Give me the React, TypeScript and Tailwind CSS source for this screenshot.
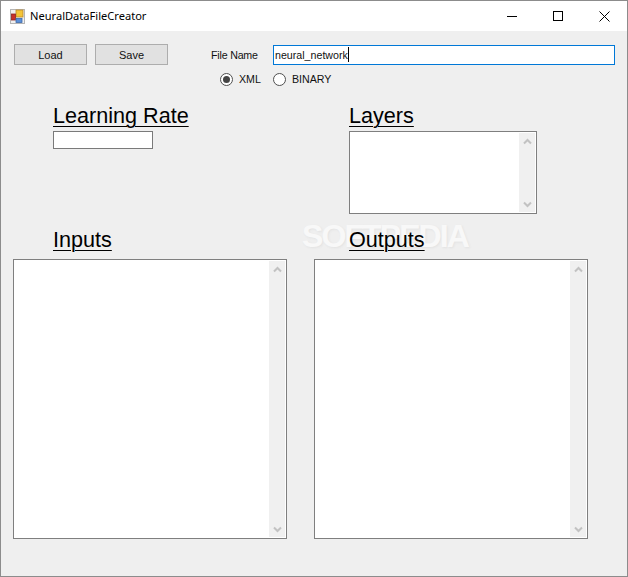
function AppIcon() {
  return (
    <svg width="15" height="15" viewBox="0 0 15 15" className="shrink-0">
      <rect x="0.5" y="0.5" width="14" height="14" fill="#f0f0f0" stroke="#b5b5b5" />
      <rect x="6" y="1" width="7" height="7" fill="#f5c537" stroke="#b8872a" strokeWidth="0.8" />
      <rect x="1.5" y="5" width="4" height="6" fill="#c8302a" stroke="#8f2420" strokeWidth="0.8" />
      <rect x="6" y="9.5" width="6" height="4" fill="#5b8fd8" stroke="#3d68a8" strokeWidth="0.8" />
    </svg>
  );
}

function WindowButtons() {
  return (
    <div className="ml-auto flex h-full items-center">
      <div className="flex w-[46px] items-center justify-center">
        <svg width="10" height="10" viewBox="0 0 10 10"><path d="M0 5.5H10" stroke="#000" strokeWidth="1" /></svg>
      </div>
      <div className="flex w-[46px] items-center justify-center">
        <svg width="10" height="10" viewBox="0 0 10 10"><rect x="0.5" y="0.5" width="9" height="9" fill="none" stroke="#000" strokeWidth="1" /></svg>
      </div>
      <div className="flex w-[46px] items-center justify-center">
        <svg width="11" height="11" viewBox="0 0 11 11"><path d="M0.5 0.5L10.5 10.5M10.5 0.5L0.5 10.5" stroke="#000" strokeWidth="1" /></svg>
      </div>
    </div>
  );
}

function Chevron({ down }: { down?: boolean }) {
  return (
    <svg width="9" height="7" viewBox="0 0 9 7" className={down ? "rotate-180" : ""}>
      <path d="M1 5.5 L4.5 2 L8 5.5" fill="none" stroke="#c2c2c2" strokeWidth="2" />
    </svg>
  );
}

function ScrollBox({ className }: { className: string }) {
  return (
    <div className={`flex justify-end border border-[#7f7f7f] bg-white p-px ${className}`}>
      <div className="flex w-[16px] flex-col items-center justify-between bg-[#f0f0f0] pb-[4px] pt-[5px]">
        <Chevron />
        <Chevron down />
      </div>
    </div>
  );
}

function Heading({ children }: { children: string }) {
  return <div className="relative pb-[2px] text-[21.6px] leading-[23px] text-black underline underline-offset-[3px] decoration-1">{children}</div>;
}

function Radio({ label, checked }: { label: string; checked?: boolean }) {
  return (
    <label className="flex items-center gap-[6px]">
      <span className="flex h-[13px] w-[13px] items-center justify-center rounded-full border border-[#505050] bg-white">
        {checked && <span className="h-[7px] w-[7px] rounded-full bg-[#444444]" />}
      </span>
      <span>{label}</span>
    </label>
  );
}

export default function App() {
  return (
    <div className="relative flex h-[577px] w-[628px] flex-col overflow-hidden border border-[#8c8c8c] bg-[#efefef] font-['Liberation_Sans',sans-serif] text-[10.67px] text-[#111111]">
      <div className="pointer-events-none absolute left-[301px] top-[211px] text-[32px] font-bold tracking-[-1.9px] text-white opacity-60 [text-shadow:1px_1px_2px_#dcdcdc]">
        SOFTPEDIA
      </div>

      <div className="flex h-[30px] shrink-0 items-center bg-white pl-[9px]">
        <AppIcon />
        <span className="ml-[5px] font-['Noto_Sans',sans-serif] text-[11.1px] text-black">NeuralDataFileCreator</span>
        <WindowButtons />
      </div>

      <div className="flex items-center pl-[13px] pt-[13px]">
        <button className="h-[21px] w-[73px] border border-[#adadad] bg-[#e1e1e1] pt-px text-[11px]">Load</button>
        <button className="ml-[8px] h-[21px] w-[73px] border border-[#adadad] bg-[#e1e1e1] pt-px text-[11px]">Save</button>
        <span className="ml-[43px] w-[62px] tracking-[-0.2px]">File Name</span>
        <div className="flex h-[20px] w-[342px] items-center border border-[#0078d7] bg-white px-[1px]">
          <span>neural_network</span>
          <span className="h-[15px] w-px bg-black" />
        </div>
      </div>

      <div className="ml-[219px] mt-[8px] flex gap-[12px] leading-[13px]">
        <Radio label="XML" checked />
        <Radio label="BINARY" />
      </div>

      <div className="mt-[18px] flex">
        <div className="ml-[52px] w-[296px]">
          <Heading>Learning Rate</Heading>
          <div className="mt-[2px] h-[18px] w-[100px] border border-[#7a7a7a] bg-white" />
        </div>
        <div>
          <Heading>Layers</Heading>
          <ScrollBox className="mt-[2px] h-[83px] w-[188px]" />
        </div>
      </div>

      <div className="mt-[14px] flex">
        <div className="ml-[52px] w-[296px]"><Heading>Inputs</Heading></div>
        <Heading>Outputs</Heading>
      </div>

      <div className="ml-[12px] mt-[6px] flex gap-[27px]">
        <ScrollBox className="h-[280px] w-[274px]" />
        <ScrollBox className="h-[280px] w-[274px]" />
      </div>
    </div>
  );
}
